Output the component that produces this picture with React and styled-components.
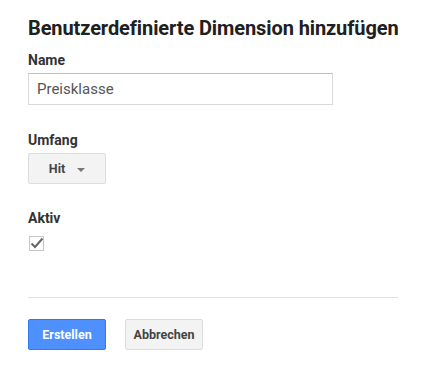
import { createGlobalStyle, styled } from "styled-components";

const GlobalStyle = createGlobalStyle`
  body {
    margin: 0;
    background: #fff;
    font-family: Roboto, "Liberation Sans", Arial, sans-serif;
  }
`

const Dialog = styled.div`
  width: 370px;
  padding: 16px 0 0 28px;
`
const Title = styled.h2`
  margin: 0 0 12px;
  font-size: 20px;
  line-height: 24px;
  font-weight: 700;
  color: #202020;
  letter-spacing: -0.1px;
  white-space: nowrap;
`
const Field = styled.div`
  margin-bottom: ${(p) => p.$gap || 26}px;
`
const Label = styled.div`
  font-size: 14px;
  font-weight: 700;
  color: #333;
  line-height: 16px;
  margin-bottom: ${(p) => p.$gap || 5}px;
`
const TextInput = styled.input`
  display: block;
  box-sizing: border-box;
  width: 305px;
  height: 32px;
  margin: 0;
  padding: 0 8px;
  border: 1px solid #d9d9d9;
  border-top-color: #c0c0c0;
  font: 15px Roboto, "Liberation Sans", sans-serif;
  color: #555;
  outline: none;
`
const Button = styled.button`
  box-sizing: border-box;
  height: 31px;
  width: 78px;
  padding: 0;
  border-radius: 2px;
  font: 700 12.5px Roboto, "Liberation Sans", sans-serif;
  border: 1px solid ${(p) => (p.$primary ? "#3079ed" : "#dcdcdc")};
  background: ${(p) => (p.$primary ? "#4d90fe" : "#f3f3f3")};
  color: ${(p) => (p.$primary ? "#fff" : "#444")};
  display: flex;
  align-items: center;
  justify-content: center;
  gap: 12px;
`
const Caret = styled.span`
  width: 0;
  height: 0;
  border-left: 4px solid transparent;
  border-right: 4px solid transparent;
  border-top: 4px solid #777;
  margin-top: 2px;
`
const Check = styled.span`
  display: block;
  width: 15px;
  height: 15px;
  margin-left: 1px;
`
const Divider = styled.hr`
  border: 0;
  border-top: 1px solid #e0e0e0;
  margin: 0 0 21px;
`
const Actions = styled.div`
  display: flex;
  gap: 19px;
`

function App() {
  return (
    <>
      <GlobalStyle />
      <Dialog>
        <Title>Benutzerdefinierte Dimension hinzufügen</Title>
        <Field $gap={27}>
          <Label>Name</Label>
          <TextInput defaultValue="Preisklasse" />
        </Field>
        <Field $gap={26}>
          <Label>Umfang</Label>
          <Button>
            Hit <Caret />
          </Button>
        </Field>
        <Field $gap={46}>
          <Label $gap={10}>Aktiv</Label>
          <Check>
            <svg width="15" height="15" viewBox="0 0 15 15">
              <rect x="0.5" y="0.5" width="14" height="14" fill="#fff" stroke="#c6c6c6" />
              <path d="M2.5 7.5 L6 11 L13.5 2.5" fill="none" stroke="#666" strokeWidth="2" />
            </svg>
          </Check>
        </Field>
        <Divider />
        <Actions>
          <Button $primary>Erstellen</Button>
          <Button>Abbrechen</Button>
        </Actions>
      </Dialog>
    </>
  );
}

export default App;
